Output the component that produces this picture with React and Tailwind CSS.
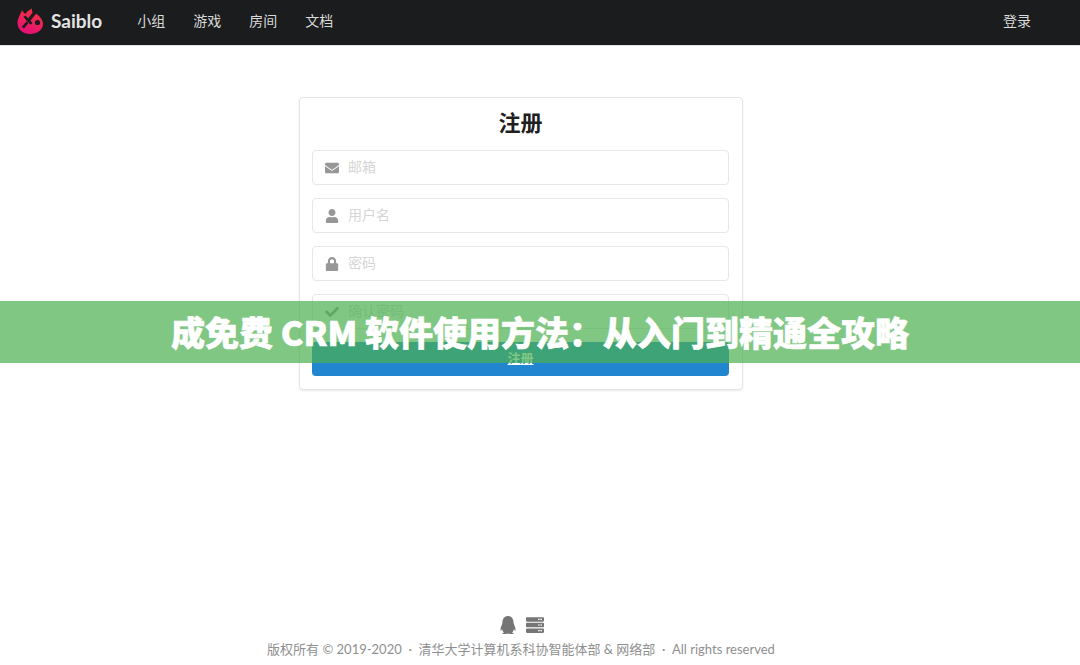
import { FaEnvelope, FaUser, FaLock, FaCheck, FaQq, FaServer } from "react-icons/fa";

const font = "font-['Lato','Noto_Sans_CJK_SC',sans-serif]";

const navItems = ["小组", "游戏", "房间", "文档"];

const fields = [
  { icon: FaEnvelope, placeholder: "邮箱", type: "email" },
  { icon: FaUser, placeholder: "用户名", type: "text" },
  { icon: FaLock, placeholder: "密码", type: "password" },
  { icon: FaCheck, placeholder: "确认密码", type: "password" },
];

const Logo = () => (
  <svg viewBox="0 0 26 26" className="h-[26px] w-[26px] shrink-0">
    <defs>
      <linearGradient id="flame" x1="0.7" y1="0" x2="0.3" y2="1">
        <stop offset="0" stopColor="#f5333f" />
        <stop offset="1" stopColor="#e20f78" />
      </linearGradient>
    </defs>
    <path
      d="M5 2 C6 4 7 5 8.5 6 C9.5 4 12 2 15 0.5 C14.5 3 15.5 5 17 6 L19 5.5 C23 8.5 26 12 26 16 C26 22 20 26 13 26 C6 26 0.5 21.5 0.5 15 C0.5 10 3.5 6.5 5 2 Z"
      fill="url(#flame)"
    />
    {/* sword, from the top right down to the lower left */}
    <path d="M20 0.5 L19.2 5.5 L12 14.5 L9.5 12.5 L16.5 3.5 Z" fill="#1b1c1d" />
    <path d="M6.5 9 L8.5 7.5 L15.5 15 L13.5 16.8 Z" fill="#1b1c1d" />
    <path d="M9.5 13.5 L11.5 15 L7 20.5 L4.8 18.8 Z" fill="#1b1c1d" />
    <circle cx="20.5" cy="14.5" r="2.6" fill="#1b1c1d" />
  </svg>
);

const Field = ({ icon: Icon, placeholder, type }) => (
  <div className="flex h-[35px] items-center rounded-[4px] border border-[#e6e6e6] bg-white">
    <span className="flex w-[35px] shrink-0 justify-center pl-[2px] text-[14px] text-[#979797]">
      <Icon />
    </span>
    <input
      type={type}
      placeholder={placeholder}
      className="min-w-0 flex-1 bg-transparent pb-[2px] text-[14px] outline-none placeholder:text-[#d6d6d6]"
    />
  </div>
);

export default function App() {
  return (
    <div className={`relative flex h-screen flex-col overflow-hidden bg-white ${font}`}>
      {/* Navbar */}
      <header className="flex h-[46px] shrink-0 items-center border-b border-[#e4e4e4] bg-[#1b1c1d] pb-[4px] pl-[17px] pr-[49px] text-[14px] text-[#d9d9d9]">
        <Logo />
        <span className="ml-[8px] mr-[35px] text-[19px] font-bold leading-none text-[#e3e3e3]">Saiblo</span>
        <nav className="flex gap-[28px]">
          {navItems.map((item) => (
            <a key={item} className="w-[28px] whitespace-nowrap">
              {item}
            </a>
          ))}
        </nav>
        <a className="ml-auto">登录</a>
      </header>

      {/* Register card */}
      <main className="flex-1 pl-[299px] pt-[51px]">
        <div className="flex h-[293px] w-[444px] flex-col rounded-[4px] border border-[#e4e4e4] pl-[12px] pr-[13px] shadow-[0_1px_2px_rgba(34,36,38,0.1)]">
          <h1 className="flex h-[52px] shrink-0 items-center justify-center pb-[4px] text-[22px] font-bold text-[#1f1f1f]">注册</h1>
          <form className="flex flex-col gap-[13px]">
            {fields.map((field) => (
              <Field key={field.placeholder} {...field} />
            ))}
            <button
              type="button"
              className="h-[34px] rounded-[4px] bg-[#2185d0] text-[13px] font-bold text-white underline"
            >
              注册
            </button>
          </form>
        </div>
      </main>

      {/* Footer */}
      <footer className="flex shrink-0 flex-col items-center pb-[6px] pr-[38px] text-[13px] text-[#8f8f8f]">
        <div className="flex h-[20px] items-center gap-[9px] text-[18px] text-[#757575]">
          <FaQq />
          <FaServer />
        </div>
        <p className="mt-[4px] whitespace-pre leading-[20px]">版权所有 © 2019-2020  ·  清华大学计算机系科协智能体部 & 网络部  ·  All rights reserved</p>
      </footer>

      {/* Title banner over the page */}
      <div className="absolute inset-x-0 top-[301px] flex h-[62px] items-center justify-center bg-[#4caf50]/70 pb-[2px]">
        <h2 className="whitespace-pre font-['Noto_Sans_CJK_SC',sans-serif] text-[34px] font-black text-white [-webkit-text-stroke:0.6px_white]">成免费 CRM 软件使用方法：从入门到精通全攻略</h2>
      </div>
    </div>
  );
}
